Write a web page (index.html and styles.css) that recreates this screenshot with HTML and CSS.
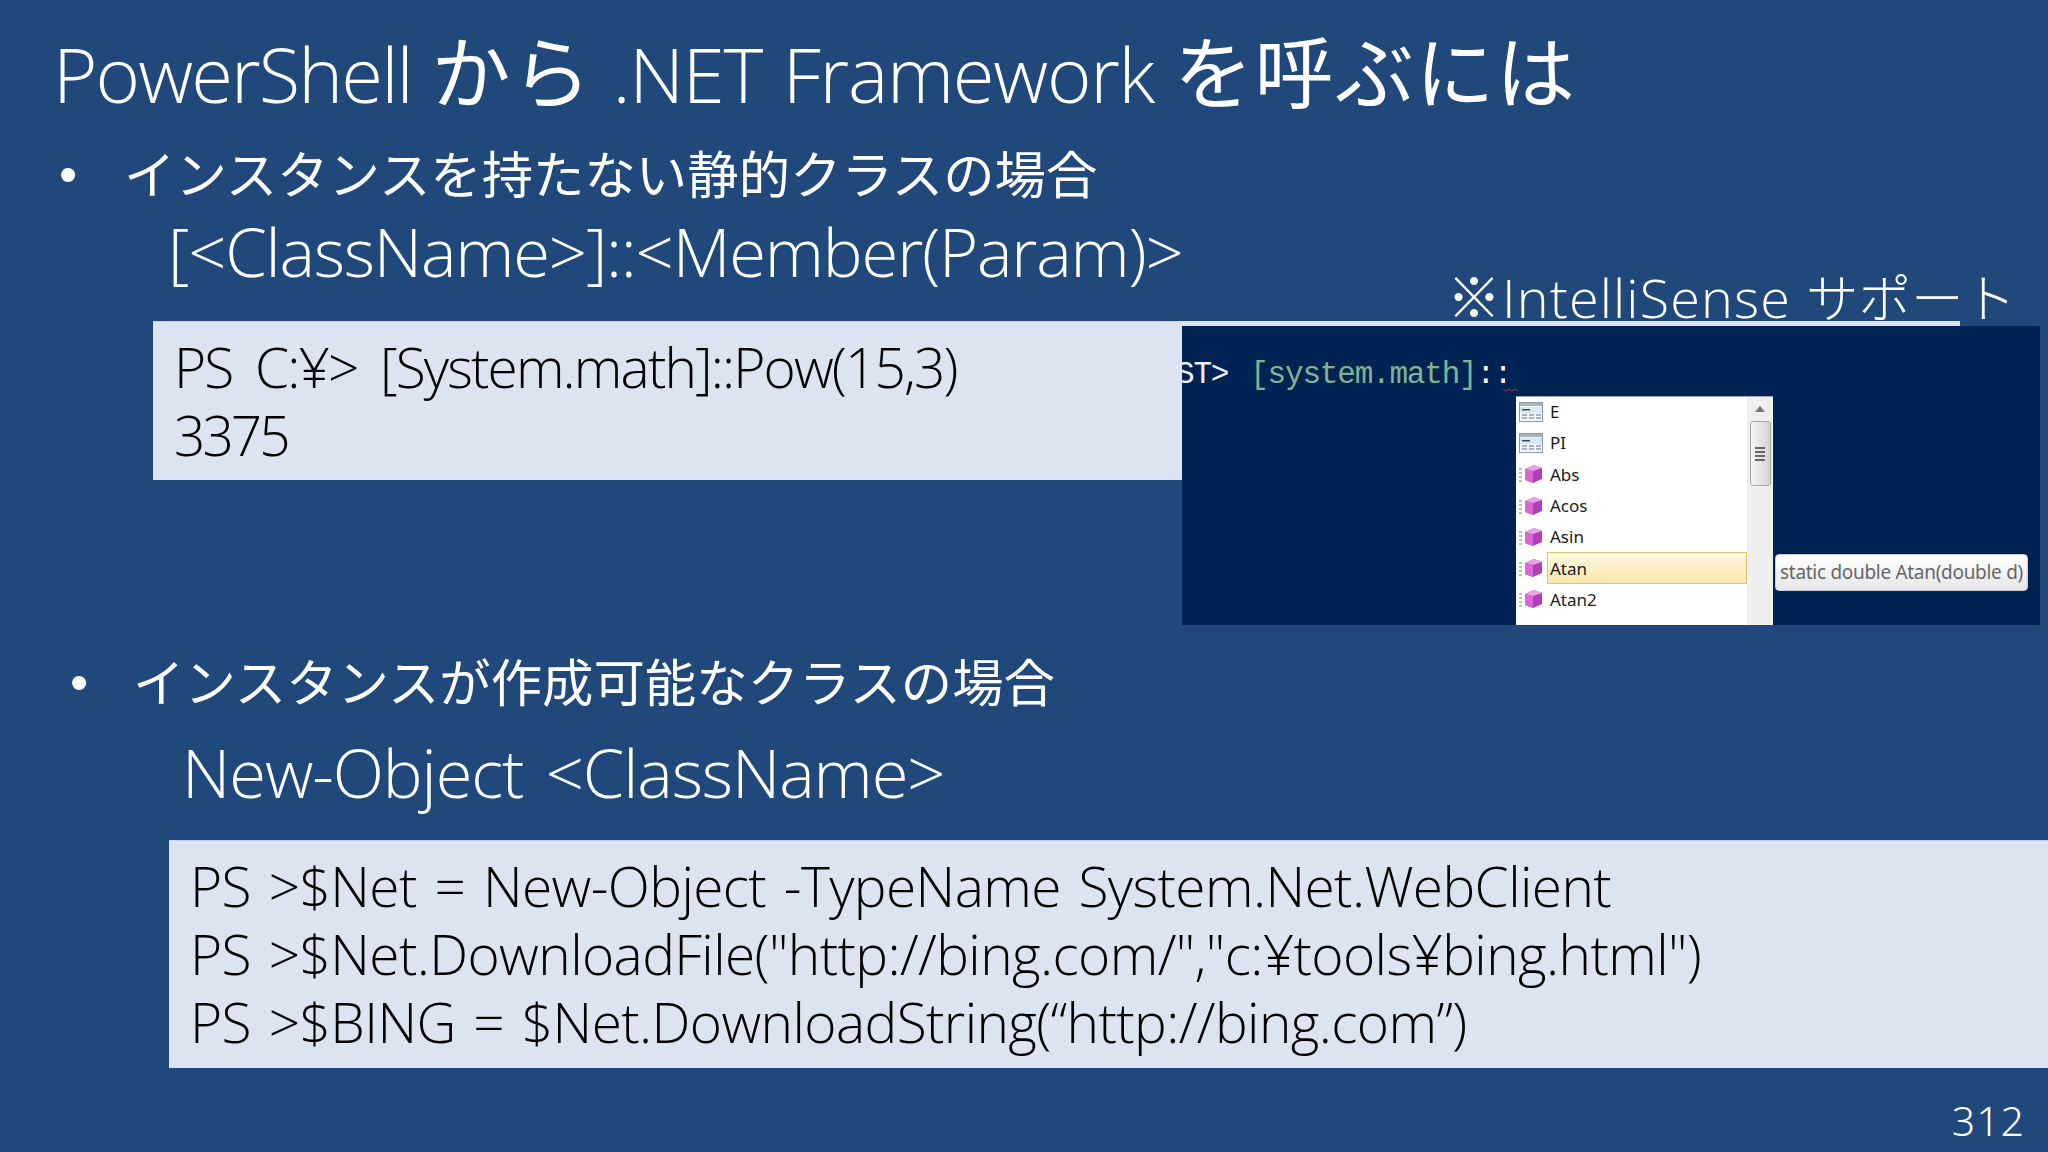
FILE: index.html
```html
<!DOCTYPE html>
<html lang="ja">
<head>
<meta charset="utf-8">
<title>PowerShell から .NET Framework を呼ぶには</title>
<link rel="stylesheet" href="styles.css">
</head>
<body>
<svg class="defs" width="0" height="0" aria-hidden="true">
  <defs>
    <symbol id="ico-field" viewBox="0 0 24 20">
      <rect x="0.5" y="0.5" width="23" height="19" fill="#f4f8fc" stroke="#8b97a3"/>
      <rect x="1" y="1" width="22" height="3" fill="#a9b3bd"/>
      <rect x="1" y="5" width="22" height="6" fill="#d5e8f6"/>
      <rect x="3" y="7" width="8" height="1.5" fill="#3a4a5a"/>
      <path d="M3 13h5M10 13h5M17 13h5M3 16h5M10 16h5M17 16h5" stroke="#8a9aaa" stroke-width="1.5"/>
    </symbol>
    <symbol id="ico-method" viewBox="0 0 24 20">
      <path d="M0 5h3M0 9h3M0 13h3M0 17h3" stroke="#b9c2a8" stroke-width="2"/>
      <path d="M6 5l9-4 8 3v11l-9 4-8-3z" fill="#b13fb5"/>
      <path d="M6 5l9-4 8 3-9 3z" fill="#e9a4e6"/>
      <path d="M6 5l8 2v12l-8-3z" fill="#d768d6"/>
    </symbol>
  </defs>
</svg>
<main class="slide">
  <h1 class="title">PowerShell <span class="jp">から</span> <span class="net">.NET Framework</span> <span class="jp">を呼ぶには</span></h1>

  <p class="bullet bullet-first"><span class="dot">•</span><span class="bullet-text">インスタンスを持たない静的クラスの場合</span></p>
  <p class="syntax syntax-first">[&lt;ClassName&gt;]::&lt;Member(Param)&gt;</p>

  <div class="code code-first">
    <div class="code-line">PS C:¥&gt; [System.math]::Pow(15,3)</div>
    <div class="code-line code-result">3375</div>
  </div>

  <p class="bullet bullet-second"><span class="dot">•</span><span class="bullet-text">インスタンスが作成可能なクラスの場合</span></p>
  <p class="syntax syntax-second">New-Object &lt;ClassName&gt;</p>

  <div class="code code-second">
    <div class="code-line">PS &gt;$Net = New-Object -TypeName System.Net.WebClient</div>
    <div class="code-line">PS &gt;$Net.DownloadFile("http://bing.com/","c:¥tools¥bing.html")</div>
    <div class="code-line">PS &gt;$BING = $Net.DownloadString(“http://bing.com”)</div>
  </div>

  <div class="page-number">312</div>

  <div class="top-rule"></div>

  <section class="console">
    <div class="prompt"><span class="prompt-host">ST&gt;</span><span class="prompt-cmd">[system.math]</span><span class="prompt-op">::</span></div>
    <svg class="squiggle" width="16" height="4" viewBox="0 0 16 4" aria-hidden="true"><path d="M0 1l3 2 3-2 3 2 3-2 3 2" fill="none" stroke="#b0305a" stroke-width="1"/></svg>
    <div class="popup">
      <ul class="list">
        <li class="row"><svg class="icon"><use href="#ico-field"/></svg><span class="label">E</span></li>
        <li class="row"><svg class="icon"><use href="#ico-field"/></svg><span class="label">PI</span></li>
        <li class="row"><svg class="icon"><use href="#ico-method"/></svg><span class="label">Abs</span></li>
        <li class="row"><svg class="icon"><use href="#ico-method"/></svg><span class="label">Acos</span></li>
        <li class="row"><svg class="icon"><use href="#ico-method"/></svg><span class="label">Asin</span></li>
        <li class="row"><svg class="icon"><use href="#ico-method"/></svg><span class="label label-active">Atan</span></li>
        <li class="row"><svg class="icon"><use href="#ico-method"/></svg><span class="label">Atan2</span></li>
      </ul>
      <div class="scrollbar">
        <div class="arrow"></div>
        <div class="thumb"><span class="grip"></span><span class="grip"></span><span class="grip"></span><span class="grip"></span></div>
      </div>
    </div>
    <div class="tip">static double Atan(double d)</div>
  </section>

  <div class="note">※IntelliSense <span class="note-jp">サポート</span></div>
</main>
</body>
</html>
```
FILE: styles.css
```css
* { box-sizing: border-box; }
html, body { margin: 0; padding: 0; }
body { width: 2048px; height: 1152px; overflow: hidden; background: #20487a; }
.defs { position: absolute; }
.slide {
  position: relative;
  width: 2048px;
  height: 1152px;
  overflow: hidden;
  display: flex;
  flex-direction: column;
  background: #20487a;
  color: #fff;
  font-family: "Open Sans", "Noto Sans CJK JP", sans-serif;
  font-weight: 300;
}
.title {
  margin: 23px 0 0 53px;
  height: 100px;
  font-size: 76px;
  line-height: 100px;
  font-weight: 300;
  letter-spacing: -1.9px;
  word-spacing: 2px;
  white-space: nowrap;
}
.jp { font-size: 79px; font-weight: 400; letter-spacing: 1.5px; }
.net { letter-spacing: -1.25px; }
.bullet { margin: 0; display: flex; align-items: center; font-size: 51.4px; line-height: 70px; font-weight: 400; white-space: nowrap; }
.bullet-first { margin: 16px 0 0 59px; }
.bullet-second { margin: 0 0 0 70px; padding-top: 167px; }
.dot { width: 65px; font-family: "Liberation Sans", sans-serif; font-size: 52px; }
.bullet-second .dot { width: 63px; }
.syntax { margin: 0; font-size: 67px; line-height: 90px; white-space: nowrap; }
.syntax-first { margin: -3px 0 0 168px; letter-spacing: -1.2px; }
.syntax-second { margin: 10px 0 0 182px; letter-spacing: -1.1px; word-spacing: 6px; }
.code {
  color: #000;
  background: #dde4f1;
  font-size: 55px;
  line-height: 68px;
  white-space: nowrap;
  border-top: 1px solid #c5d3e8;
  padding-left: 21px;
}
.code-first { margin: 25px 0 0 153px; width: 1029px; height: 159px; padding-top: 11px; letter-spacing: -1.85px; word-spacing: 10px; }
.code-result { letter-spacing: -3px; }
.code-second { margin: 23px 0 0 169px; height: 228px; padding-top: 11px; letter-spacing: -0.6px; word-spacing: 4px; }
.page-number {
  margin: 27px 23px 0 auto;
  font-size: 41px;
  line-height: 50px;
  font-family: "Noto Sans", sans-serif;
  font-weight: 300;
  letter-spacing: 1px;
}
.top-rule { position: absolute; left: 1182px; top: 321px; width: 778px; height: 5px; background: #dde4f1; }
.console {
  position: absolute;
  left: 1182px;
  top: 326px;
  width: 858px;
  height: 299px;
  background: #012353;
  overflow: hidden;
}
.prompt {
  position: absolute;
  left: -6px;
  top: 30px;
  font-family: "Liberation Mono", monospace;
  font-size: 31px;
  line-height: 38px;
  font-weight: 400;
  letter-spacing: -1.2px;
  white-space: nowrap;
  color: #fff;
}
.prompt-cmd { color: #7fb48f; margin-left: 22px; }
.prompt-host { color: #eef; }
.squiggle { position: absolute; left: 321px; top: 62px; }
.popup {
  position: absolute;
  left: 334px;
  top: 70px;
  width: 257px;
  height: 240px;
  display: flex;
  background: #fff;
  border-top: 1px solid #9aa7bb;
}
.list { margin: -1px 0 0; padding: 0; list-style: none; width: 231px; }
.row { height: 31.3px; display: flex; align-items: center; padding-left: 3px; }
.icon { width: 24px; height: 20px; flex: none; }
.label { flex: 1; margin-left: 4px; padding-left: 3px; font-family: "Noto Sans", sans-serif; font-size: 17px; font-weight: 400; color: #1a1a1a; }
.label-active {
  align-self: stretch;
  display: flex;
  align-items: center;
  border: 1px solid #dfc26b;
  background: linear-gradient(#fff8e4, #fbe6a8);
  margin-left: 4px;
  padding-left: 2px;
}
.scrollbar { width: 26px; background: #efefef; display: flex; flex-direction: column; align-items: center; }
.arrow { width: 0; height: 0; margin-top: 9px; border-left: 5px solid transparent; border-right: 5px solid transparent; border-bottom: 6px solid #777; }
.thumb {
  width: 21px;
  height: 65px;
  margin-top: 9px;
  border: 1px solid #a8a8a8;
  border-radius: 3px;
  background: linear-gradient(90deg, #f6f6f6, #d2d2d2);
  display: flex;
  flex-direction: column;
  align-items: center;
  justify-content: center;
  gap: 2px;
}
.grip { width: 10px; height: 2px; background: #666; }
.tip {
  position: absolute;
  left: 593px;
  top: 228px;
  width: 253px;
  height: 37px;
  border: 1px solid #c9c9c9;
  border-radius: 4px;
  background: linear-gradient(#fff, #e6e6ea);
  color: #666;
  font-family: "Noto Sans", sans-serif;
  font-size: 19px;
  font-weight: 400;
  line-height: 35px;
  text-align: center;
  white-space: nowrap;
  letter-spacing: -0.3px;
}
.note {
  position: absolute;
  left: 1447px;
  top: 262px;
  font-size: 54px;
  line-height: 70px;
  letter-spacing: 1.1px;
  white-space: nowrap;
}
.note-jp { font-size: 52.5px; letter-spacing: 0; }
```
